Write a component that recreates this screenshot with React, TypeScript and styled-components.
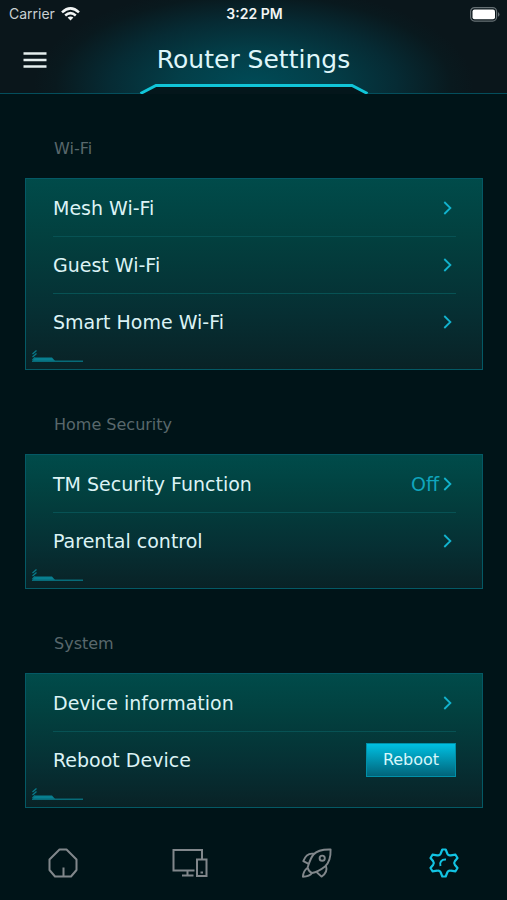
import React from "react";
import styled, { createGlobalStyle } from "styled-components";

const GlobalStyle = createGlobalStyle`
  *, *::before, *::after { box-sizing: border-box; }
  body {
    margin: 0;
    background: #001418;
    color: #dcf3f5;
    font-family: "DejaVu Sans", sans-serif;
  }
`;

const Screen = styled.div`
  display: flex;
  flex-direction: column;
  min-height: 100vh;
`;

const Top = styled.header`
  position: relative;
  height: 94px;
  border-bottom: 1px solid #044e5c;
  background: radial-gradient(ellipse 220px 100px at 50% 92%, #004b57 0%, #033e48 35%, #062b34 65%, #09191e 90%, #0a161b 100%);
`;

const StatusBar = styled.div`
  display: grid;
  grid-template-columns: 1fr auto 1fr;
  align-items: center;
  height: 28px;
  padding: 0 7px 0 9px;
  font: 500 14px/20px Inter, sans-serif;
  color: #e3e7e8;
`;

const Carrier = styled.span`
  display: flex;
  align-items: center;
  gap: 6px;
  font-weight: 400;
  color: #c9d0d2;
`;

const Clock = styled.time`
  font-weight: 600;
  color: #f3f5f5;
`;

const Battery = styled.svg`
  justify-self: end;
`;

const TitleBar = styled.div`
  display: grid;
  grid-template-columns: 48px 1fr 48px;
  align-items: center;
  height: 64px;
  padding: 0 11px;
`;

const MenuButton = styled.button`
  display: grid;
  place-items: center;
  height: 48px;
  padding: 0;
  border: 0;
  background: none;
  color: inherit;
  cursor: pointer;
`;

const Title = styled.h1`
  margin: 0;
  text-align: center;
  white-space: nowrap;
  font-size: 25px;
  line-height: 32px;
  font-weight: 400;
  color: #dff6fa;
`;

const TitleNotch = styled.svg`
  position: absolute;
  left: 50%;
  bottom: -1px;
  transform: translateX(-50%);
`;

const Content = styled.main`
  flex: 1;
  padding: 0 24px 0 25px;
`;

const Group = styled.section`
  padding-top: 45px;
`;

const GroupTitle = styled.h2`
  margin: 0 0 19px 29px;
  font-size: 16px;
  line-height: 20px;
  font-weight: 400;
  color: #59686c;
`;

const Card = styled.div`
  position: relative;
  padding: 0 26px 19px 27px;
  border: 1px solid #045965;
  background: linear-gradient(#004b4a, #02403f 30%, #062f33 70%, #092226);
`;

const CardOrnament = styled.svg`
  position: absolute;
  left: 6px;
  bottom: 6px;
`;

const Rows = styled.ul`
  margin: 0;
  padding: 0;
  list-style: none;
`;

const RowItem = styled.li`
  display: flex;
  align-items: center;
  height: 57px;
  font-size: 19px;
  line-height: 24px;

  & + & {
    border-top: 1px solid #075254;
  }
`;

const RowLink = styled.a`
  display: flex;
  flex: 1;
  align-items: center;
  height: 100%;
  color: inherit;
  text-decoration: none;
`;

const RowLabel = styled.span`
  flex: 1;
  white-space: nowrap;
`;

const RowValue = styled.span`
  margin-right: 4px;
  color: #10a5bd;
`;

const Chevron = styled.svg`
  margin-right: 4px;
`;

const RebootButton = styled.button`
  width: 90px;
  height: 34px;
  padding: 0;
  border: 1px solid #0090a9;
  background: linear-gradient(#00c0e2, #01647a);
  color: #d9f7fb;
  font: 400 16px/20px "DejaVu Sans", sans-serif;
  cursor: pointer;
`;

const Tabs = styled.nav`
  display: grid;
  grid-template-columns: repeat(4, 1fr);
  height: 74px;
`;

const Tab = styled.a<{ $active?: boolean }>`
  display: grid;
  place-items: center;
  color: ${(p) => (p.$active ? "#12c3e2" : "#81878b")};
`;

type RowData = { label: string; value?: string; action?: string };

const groups: { title: string; rows: RowData[] }[] = [
  { title: "Wi-Fi", rows: [{ label: "Mesh Wi-Fi" }, { label: "Guest Wi-Fi" }, { label: "Smart Home Wi-Fi" }] },
  { title: "Home Security", rows: [{ label: "TM Security Function", value: "Off" }, { label: "Parental control" }] },
  { title: "System", rows: [{ label: "Device information" }, { label: "Reboot Device", action: "Reboot" }] },
];

function Row({ label, value, action }: RowData) {
  if (action) {
    return (
      <RowItem>
        <RowLabel>{label}</RowLabel>
        <RebootButton type="button">{action}</RebootButton>
      </RowItem>
    );
  }
  return (
    <RowItem>
      <RowLink href="#">
        <RowLabel>{label}</RowLabel>
        {value && <RowValue>{value}</RowValue>}
        <Chevron width="9" height="14" viewBox="0 0 9 14" fill="none" stroke="#12b3ce" strokeWidth="1.8" aria-hidden="true">
          <path d="M1.3 1 7.4 7 1.3 13" />
        </Chevron>
      </RowLink>
    </RowItem>
  );
}

function HomeIcon() {
  return (
    <svg width="30" height="30" viewBox="0 0 30 30" fill="none" stroke="currentColor" strokeWidth="2" strokeLinejoin="round" aria-hidden="true">
      <path d="M11.500 1.500h7L28.500 11.500v10.500l-5.500 6.500H7l-5.500-6.500V11.500zM15.500 28v-8.500" />
    </svg>
  );
}

function DevicesIcon() {
  return (
    <svg width="36" height="30" viewBox="0 0 36 30" fill="none" stroke="currentColor" strokeWidth="2" aria-hidden="true">
      <path d="M22.500 22.500H1.500V2h28.500v9M15.500 22.500V27.500M10 27.500h11.500M25 11.500h9.500v16.500H25z" />
      <path d="M28.500 24.500h2.500" />
    </svg>
  );
}

function RocketIcon() {
  return (
    <svg width="32" height="30" viewBox="0 0 32 30" fill="none" stroke="currentColor" strokeWidth="1.900" strokeLinejoin="round" aria-hidden="true">
      <path d="M29.600 1.500C22.500 1.300 16 2.500 12.500 6.500 9.500 10 8.500 14 6.600 19.500Q7.500 23.500 11 25C14.500 24.500 19 22.500 24 18.500 28.500 14.500 29.800 8.500 29.600 1.500z" />
      <circle cx="21.200" cy="10.200" r="2.600" />
      <path d="M13 5.800C7.500 4.800 4.200 8 2.300 13.200L7.600 15.800M25 18C26.500 22.500 24.500 26 20.500 28.600L15.500 24" />
      <path d="M6.600 20C3 22 2.300 24.500 1.900 28.700 6 28.500 9 28 11 25" />
    </svg>
  );
}

function GearIcon() {
  return (
    <svg width="30" height="30" viewBox="0 0 30 30" fill="none" stroke="currentColor" strokeWidth="2.200" strokeLinecap="round" strokeLinejoin="round" aria-hidden="true">
      <path d="M13.300 1.500h3.400L18.500 6Q19.500 7.800 21.800 7.300L26.500 6.700 28.500 10 25.800 13.300Q24.500 15 25.800 16.700L28.500 20 26.500 23.300 21.800 22.700Q19.500 22.200 18.500 24L16.700 28.500H13.300L11.500 24Q10.500 22.200 8.200 22.700L3.500 23.300 1.500 20 4.200 16.700Q5.500 15 4.200 13.300L1.500 10 3.500 6.700 8.200 7.300Q10.500 7.800 11.500 6z" />
      <path d="M11.500 18C10.200 14.500 12.300 11.200 17 11.500" strokeWidth="2" strokeLinecap="butt" />
    </svg>
  );
}

export default function App() {
  return (
    <Screen>
      <GlobalStyle />
      <Top>
        <StatusBar>
          <Carrier>
            Carrier
            <svg width="19" height="14" viewBox="0 0 19 14" fill="none" stroke="#f1f4f4" strokeWidth="2.500" aria-label="Wi-Fi signal">
              <path d="M1 5.300Q9.500-2.600 18 5.300M4.200 8.500Q9.500 3.700 14.800 8.500" />
              <path d="M9.500 13.500 6.600 10.600Q9.500 8.300 12.400 10.600z" fill="#f1f4f4" stroke="none" />
            </svg>
          </Carrier>
          <Clock>3:22 PM</Clock>
          <Battery width="30" height="15" viewBox="0 0 30 15" aria-label="Battery full">
            <rect x="0.600" y="0.600" width="26" height="13.500" rx="4" fill="none" stroke="#667074" strokeWidth="1.200" />
            <rect x="2.500" y="2.500" width="22.500" height="9.700" rx="2" fill="#fff" />
            <path d="M28 5q3 2.400 0 4.800z" fill="#667074" />
          </Battery>
        </StatusBar>
        <TitleBar>
          <MenuButton type="button" aria-label="Menu">
            <svg width="24" height="16" viewBox="0 0 24 16" stroke="#e5eeee" strokeWidth="2.400" aria-hidden="true">
              <path d="M0.500 1.500h23M0.500 8h23M0.500 14.500h23" />
            </svg>
          </MenuButton>
          <Title>Router Settings</Title>
        </TitleBar>
        <TitleNotch width="230" height="11" viewBox="0 0 230 11" fill="none" aria-hidden="true">
          <path d="M2 11 17 2H213L228 11z" fill="#04161b" />
          <path d="M1.500 10.500 17 2.500H213L228.500 10.500" stroke="#11c5d8" strokeWidth="3" />
        </TitleNotch>
      </Top>
      <Content>
        {groups.map((group) => (
          <Group key={group.title}>
            <GroupTitle>{group.title}</GroupTitle>
            <Card>
              <Rows>
                {group.rows.map((row) => (
                  <Row key={row.label} {...row} />
                ))}
              </Rows>
              <CardOrnament width="52" height="13" viewBox="0 0 52 13" aria-hidden="true">
                <path d="M3 7.500H20L24 12H0z" fill="#087f90" />
                <path d="M0 11.300H51" stroke="#076b79" strokeWidth="1.500" />
                <path d="M0.500 4 4.500 0.500M0.500 7 4.500 3.500M0.500 10 3 7.500" stroke="#087a8a" strokeWidth="1.300" />
              </CardOrnament>
            </Card>
          </Group>
        ))}
      </Content>
      <Tabs aria-label="Main">
        <Tab href="#" aria-label="Home"><HomeIcon /></Tab>
        <Tab href="#" aria-label="Devices"><DevicesIcon /></Tab>
        <Tab href="#" aria-label="Boost"><RocketIcon /></Tab>
        <Tab href="#" aria-label="Settings" aria-current="page" $active><GearIcon /></Tab>
      </Tabs>
    </Screen>
  );
}
